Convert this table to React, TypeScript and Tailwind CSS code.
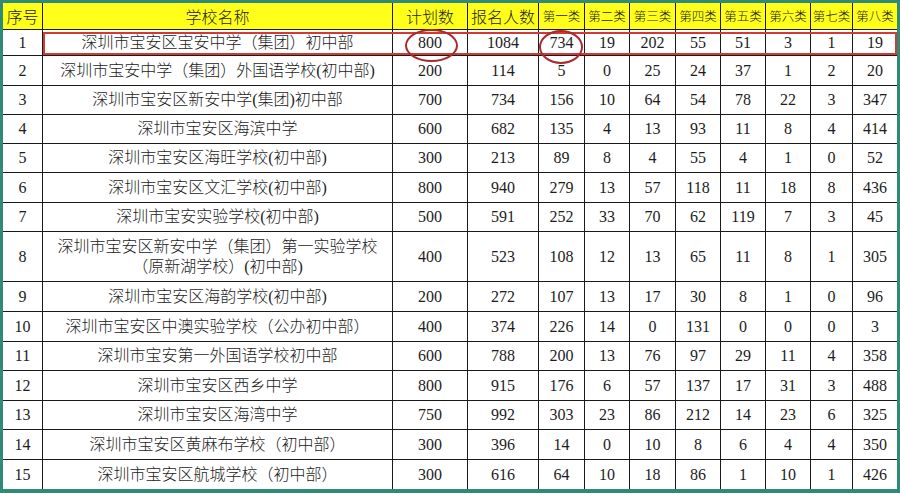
const heads = ["序号", "学校名称", "计划数", "报名人数", "第一类", "第二类", "第三类", "第四类", "第五类", "第六类", "第七类", "第八类"];

const rows: (string | number)[][] = [
  [1, "深圳市宝安区宝安中学（集团）初中部", 800, 1084, 734, 19, 202, 55, 51, 3, 1, 19],
  [2, "深圳市宝安中学（集团）外国语学校(初中部)", 200, 114, 5, 0, 25, 24, 37, 1, 2, 20],
  [3, "深圳市宝安区新安中学(集团)初中部", 700, 734, 156, 10, 64, 54, 78, 22, 3, 347],
  [4, "深圳市宝安区海滨中学", 600, 682, 135, 4, 13, 93, 11, 8, 4, 414],
  [5, "深圳市宝安区海旺学校(初中部)", 300, 213, 89, 8, 4, 55, 4, 1, 0, 52],
  [6, "深圳市宝安区文汇学校(初中部)", 800, 940, 279, 13, 57, 118, 11, 18, 8, 436],
  [7, "深圳市宝安实验学校(初中部)", 500, 591, 252, 33, 70, 62, 119, 7, 3, 45],
  [8, "深圳市宝安区新安中学（集团）第一实验学校\n（原新湖学校）(初中部)", 400, 523, 108, 12, 13, 65, 11, 8, 1, 305],
  [9, "深圳市宝安区海韵学校(初中部)", 200, 272, 107, 13, 17, 30, 8, 1, 0, 96],
  [10, "深圳市宝安区中澳实验学校（公办初中部）", 400, 374, 226, 14, 0, 131, 0, 0, 0, 3],
  [11, "深圳市宝安第一外国语学校初中部", 600, 788, 200, 13, 76, 97, 29, 11, 4, 358],
  [12, "深圳市宝安区西乡中学", 800, 915, 176, 6, 57, 137, 17, 31, 3, 488],
  [13, "深圳市宝安区海湾中学", 750, 992, 303, 23, 86, 212, 14, 23, 6, 325],
  [14, "深圳市宝安区黄麻布学校（初中部）", 300, 396, 14, 0, 10, 8, 6, 4, 4, 350],
  [15, "深圳市宝安区航城学校（初中部）", 300, 616, 64, 10, 18, 86, 1, 10, 1, 426],
];

export default function App() {
  return (
    <div className="relative w-[900px] h-[493px] bg-white border-t-[3px] border-l-[3px] border-r-[3px] border-b-[4px] border-[#2f8a78] overflow-hidden text-[#1c1c1c] font-['Liberation_Serif','Noto_Sans_CJK_SC',serif] font-light">
      <div className="grid grid-cols-[40px_350px_75px_71px_46px_45px_46px_45px_45px_45px_42px_44px] grid-rows-[27px_26px_30px_29px_29px_29px_30px_29px_50px_30px_30px_29px_30px_29px_30px_29px]">
        {heads.map((h, i) => (
          <div
            key={h}
            className={`flex items-center justify-center bg-[#ffff1a] border-b border-[#1a1a1a] font-['Noto_Sans_CJK_SC',sans-serif] font-light ${i < 11 ? "border-r" : ""} ${i > 3 ? "text-[12.5px]" : "text-[16px]"}`}
          >
            {h}
          </div>
        ))}
        {rows.map((r, ri) =>
          r.map((c, ci) => (
            <div
              key={ri + "-" + ci}
              className={`flex items-center justify-center text-center border-[#1a1a1a] ${ci < 11 ? "border-r" : ""} ${ri < 14 ? "border-b" : ""} ${ci === 1 ? "text-[16px] leading-[20px] whitespace-pre-line" : "text-[16px]"}`}
            >
              {c}
            </div>
          ))
        )}
      </div>

      {/* red marks drawn on top of the screenshot */}
      <div className="absolute left-[40px] top-[29px] w-[854px] h-[23px] border-2 border-[#d23a36]" />
      <div className="absolute left-[402px] top-[26px] w-[53px] h-[33px] rounded-[50%] border-2 border-[#a82a2e]" />
      <div className="absolute left-[536px] top-[27px] w-[44px] h-[34px] rounded-[50%] border-2 border-[#a82a2e]" />
    </div>
  );
}
